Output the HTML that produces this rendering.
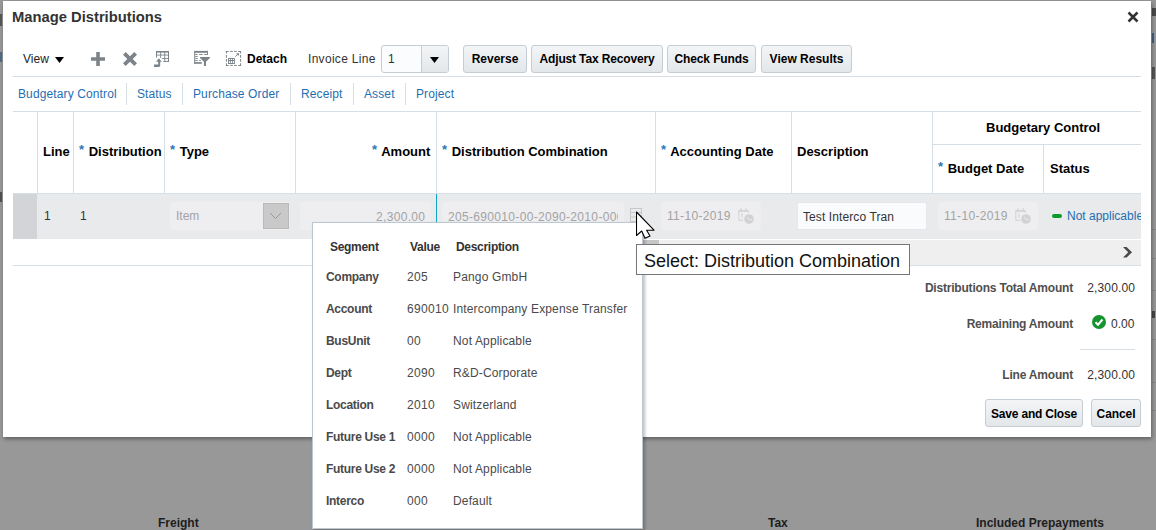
<!DOCTYPE html>
<html><head><meta charset="utf-8">
<style>
*{margin:0;padding:0;box-sizing:border-box}
html,body{width:1156px;height:530px;overflow:hidden;background:#989898;font-family:"Liberation Sans",sans-serif;position:relative}
.a{position:absolute;white-space:nowrap}
.t12{font-size:12px;line-height:12px}
.t13{font-size:13px;line-height:13px}
.b{font-weight:bold}
#dlg{position:absolute;left:3px;top:1px;width:1148px;height:436px;background:#fff;box-shadow:1px 2px 4px rgba(0,0,0,.38)}
.hl{position:absolute;height:1px;background:#d6dfe6}
.vl{position:absolute;width:1px;background:#d6dfe6}
.btn{position:absolute;height:28px;border:1px solid #c4ccd4;border-radius:3px;background:linear-gradient(#f3f5f7,#e3e7ea);font-weight:bold;font-size:12px;color:#000;text-align:center;line-height:26px}
.lnk{color:#1f6fb2;font-size:12px;line-height:12px;letter-spacing:0.12px}
.hd{font-size:13px;line-height:13px;font-weight:bold;color:#000}
.ast{color:#2a78b8;font-size:13px;font-weight:bold;position:relative;top:-2px;margin-right:1px}
.num{letter-spacing:0.33px}
.ico{position:absolute;fill:#7d8489}
.pp{font-size:12px;line-height:12px;color:#4a4a4a;letter-spacing:0.15px}
.pp.b{letter-spacing:-0.3px}
.pv{letter-spacing:0.33px}
</style></head><body>
<!-- background fragments -->
<div class="a b" style="left:158px;top:516px;font-size:12px;color:#1e1e1e">Freight</div>
<div class="a b" style="left:768px;top:516px;font-size:12px;color:#1e1e1e">Tax</div>
<div class="a b" style="left:976px;top:516px;font-size:12px;color:#1e1e1e">Included Prepayments</div>

<div class="a" style="left:1152px;top:8px;width:4px;height:8px;background:#2a2a2a;opacity:.7"></div>
<div class="a" style="left:1152px;top:33px;width:2px;height:10px;background:#1f4f80;opacity:.7"></div>
<div class="a" style="left:1152px;top:67px;width:3px;height:12px;background:#2a2a2a;opacity:.6"></div>
<div class="a" style="left:1152px;top:311px;width:3px;height:7px;background:#222;opacity:.7"></div>
<div class="a" style="left:0;top:14px;width:2px;height:12px;background:#2a2a2a;opacity:.6"></div>
<div class="a" style="left:0;top:52px;width:2px;height:10px;background:#1f4f80;opacity:.6"></div>
<div class="a" style="left:0;top:192px;width:2px;height:10px;background:#222;opacity:.6"></div>
<div class="a" style="left:1152px;top:229px;width:4px;height:1px;background:#888"></div>
<div class="a" style="left:1152px;top:258px;width:4px;height:1px;background:#888"></div>
<div class="a" style="left:1152px;top:290px;width:4px;height:1px;background:#888"></div>
<div class="a" style="left:1152px;top:339px;width:4px;height:1px;background:#888"></div>
<div class="a" style="left:1152px;top:382px;width:4px;height:1px;background:#888"></div>
<div class="a" style="left:1152px;top:410px;width:4px;height:1px;background:#888"></div>
<div id="dlg"></div>

<!-- title -->
<div class="a b" style="left:12px;top:10px;font-size:14.75px;line-height:15px;color:#333">Manage Distributions</div>
<!-- close -->
<svg class="a" style="left:1127px;top:11px" width="12" height="12" viewBox="0 0 12 12"><path d="M1.5 1.5L10.5 10.5M10.5 1.5L1.5 10.5" stroke="#333" stroke-width="2.5"/></svg>

<!-- toolbar -->
<div class="a t12" style="left:23px;top:53px;color:#222">View</div>
<svg class="a" style="left:55px;top:57px" width="9" height="6" viewBox="0 0 9 6"><path d="M0 0H9L4.5 6Z" fill="#000"/></svg>
<svg class="ico" style="left:91px;top:52px" width="14" height="14" viewBox="0 0 14 14"><path d="M5.2 0H8.8V5.2H14V8.8H8.8V14H5.2V8.8H0V5.2H5.2Z"/></svg>
<svg class="ico" style="left:123px;top:52px" width="14" height="14" viewBox="0 0 14 14"><path d="M0 2.69L2.69 0L7 4.31L11.31 0L14 2.69L9.69 7L14 11.31L11.31 14L7 9.69L2.69 14L0 11.31L4.31 7Z"/></svg>
<svg class="a" style="left:150px;top:48px" width="24" height="22" viewBox="0 0 24 22"><g fill="#7d8489">
<rect x="6" y="3" width="13" height="1.6"/>
<rect x="18" y="3" width="1" height="11"/>
<rect x="14.3" y="3" width="0.9" height="11"/>
<rect x="10.2" y="3" width="0.9" height="7"/>
<rect x="6" y="3" width="1" height="6.6"/>
<rect x="6" y="6.6" width="13" height="0.9"/>
<rect x="11.8" y="10" width="7.2" height="0.9"/>
<rect x="13.3" y="12.9" width="5.7" height="1"/>
<path d="M6 13.7H11.8L8.9 10.2Z"/>
<path d="M8.2 13H10.2V17.5Q10.2 18.9 8.8 18.9H4V16.6H8.2Z"/>
</g></svg>
<svg class="a" style="left:190px;top:48px" width="24" height="22" viewBox="0 0 24 22"><g fill="#7d8489">
<rect x="4.2" y="2.9" width="13.7" height="1.9"/>
<rect x="4.2" y="2.9" width="1" height="12.9"/>
<rect x="17" y="2.9" width="0.9" height="4"/>
<rect x="4.2" y="14.1" width="7.6" height="1.7"/>
<rect x="5.2" y="6" width="2.5" height="0.9"/>
<rect x="9.1" y="6" width="3.6" height="0.9"/>
<rect x="14.1" y="6" width="3.8" height="0.9"/>
<rect x="5.2" y="8.1" width="2.5" height="0.9"/>
<rect x="5.2" y="10" width="2.5" height="0.9"/>
<rect x="5.2" y="12" width="2.5" height="0.9"/>
<rect x="9.1" y="12" width="1.7" height="0.9"/>
<path d="M10 8.9H19.9V10L16 13.7V17.9H13.9V13.7L10 10Z"/>
</g></svg>
<svg class="a" style="left:222px;top:48px" width="24" height="22" viewBox="0 0 24 22"><g fill="#7d8489">
<path d="M3.9 2.9H6.6V3.9H4.9V5.6H3.9Z"/>
<rect x="8.1" y="2.9" width="2.7" height="1"/>
<rect x="12" y="2.9" width="2.7" height="1"/>
<path d="M16.2 2.9H19.1V5.6H18.1V3.9H16.2Z"/>
<rect x="3.9" y="7" width="1" height="2.8"/>
<rect x="3.9" y="11" width="1" height="2.7"/>
<rect x="18.1" y="7" width="1" height="2.8"/>
<rect x="18.1" y="11" width="1" height="2.7"/>
<path d="M3.9 15.2H4.9V16.9H6.6V17.9H3.9Z"/>
<rect x="8.1" y="16.9" width="2.7" height="1"/>
<rect x="12" y="16.9" width="2.7" height="1"/>
<path d="M18.1 15.2H19.1V17.9H16.2V16.9H18.1Z"/>
<rect x="6" y="10" width="6.9" height="6" rx="0.6"/>
<path d="M14.1 5.2H17V7.9Z"/>
</g>
<g fill="#fff"><rect x="6.9" y="11" width="1.2" height="1"/><rect x="8.9" y="11" width="1.3" height="1"/><rect x="11" y="11" width="1" height="1"/><rect x="6.9" y="13.1" width="1.2" height="1.9"/><rect x="8.9" y="13.1" width="1.3" height="1.9"/><rect x="11" y="13.1" width="1" height="1.9"/></g>
<path d="M13.3 8.7L16 6" stroke="#7d8489" stroke-width="1" fill="none"/>
</svg>
<div class="a t12 b" style="left:247px;top:53px;color:#000">Detach</div>
<div class="a t12" style="left:308px;top:53px;letter-spacing:0.3px;color:#333">Invoice Line</div>
<div class="a" style="left:381px;top:45px;width:68px;height:28px;border:1px solid #c4ccd4;border-radius:3px;background:#fbfcfd;overflow:hidden">
  <div class="a" style="left:39px;top:0;width:28px;height:26px;border-left:1px solid #c4ccd4;background:linear-gradient(#f3f5f7,#e3e7ea)"></div>
</div>
<div class="a t12" style="left:388px;top:53px;color:#333">1</div>
<svg class="a" style="left:430px;top:57px" width="9" height="6" viewBox="0 0 9 6"><path d="M0 0H9L4.5 6Z" fill="#000"/></svg>
<div class="btn" style="left:463px;top:45px;width:64px">Reverse</div>
<div class="btn" style="left:531px;top:45px;width:132px;letter-spacing:-0.15px">Adjust Tax Recovery</div>
<div class="btn" style="left:667px;top:45px;width:89px;letter-spacing:-0.1px">Check Funds</div>
<div class="btn" style="left:761px;top:45px;width:91px">View Results</div>
<div class="hl" style="left:13px;top:76px;width:1128px"></div>

<!-- links -->
<div class="a lnk" style="left:18px;top:88px">Budgetary Control</div>
<div class="vl" style="left:126px;top:83px;height:22px"></div>
<div class="a lnk" style="left:137px;top:88px">Status</div>
<div class="vl" style="left:182px;top:83px;height:22px"></div>
<div class="a lnk" style="left:193px;top:88px">Purchase Order</div>
<div class="vl" style="left:290px;top:83px;height:22px"></div>
<div class="a lnk" style="left:301px;top:88px">Receipt</div>
<div class="vl" style="left:353px;top:83px;height:22px"></div>
<div class="a lnk" style="left:364px;top:88px">Asset</div>
<div class="vl" style="left:405px;top:83px;height:22px"></div>
<div class="a lnk" style="left:416px;top:88px">Project</div>

<!-- table header -->
<div class="hl" style="left:13px;top:111px;width:1128px"></div>
<div class="vl" style="left:37px;top:111px;height:82px"></div>
<div class="vl" style="left:73px;top:111px;height:82px"></div>
<div class="vl" style="left:164px;top:111px;height:82px"></div>
<div class="vl" style="left:295px;top:111px;height:82px"></div>
<div class="vl" style="left:436px;top:111px;height:82px"></div>
<div class="vl" style="left:655px;top:111px;height:82px"></div>
<div class="vl" style="left:791px;top:111px;height:82px"></div>
<div class="vl" style="left:932px;top:111px;height:82px"></div>
<div class="hl" style="left:932px;top:144px;width:209px"></div>
<div class="vl" style="left:1043px;top:144px;height:49px"></div>
<div class="hl" style="left:13px;top:193px;width:1128px"></div>

<div class="a hd" style="left:43px;top:145px">Line</div>
<div class="a hd" style="left:79px;top:145px"><span class="ast">*</span> Distribution</div>
<div class="a hd" style="left:170px;top:145px"><span class="ast">*</span> Type</div>
<div class="a hd" style="left:372px;top:145px"><span class="ast">*</span> Amount</div>
<div class="a hd" style="left:442px;top:145px"><span class="ast">*</span> Distribution Combination</div>
<div class="a hd" style="left:661px;top:145px"><span class="ast">*</span> Accounting Date</div>
<div class="a hd" style="left:797px;top:145px">Description</div>
<div class="a hd" style="left:986px;top:121px">Budgetary Control</div>
<div class="a hd" style="left:938px;top:162px"><span class="ast">*</span> Budget Date</div>
<div class="a hd" style="left:1050px;top:162px">Status</div>

<!-- data row -->
<div class="a" style="left:13px;top:194px;width:1128px;height:45px;background:#e9eaec"></div>
<div class="a" style="left:13px;top:194px;width:24px;height:45px;background:#d2d4d7"></div>
<div class="a t12" style="left:44px;top:210px;color:#333">1</div>
<div class="a t12" style="left:80px;top:210px;color:#333">1</div>
<div class="a" style="left:170px;top:202px;width:120px;height:28px;border-radius:2px;background:#eeeef1"></div>
<div class="a t12" style="left:176px;top:210px;color:#a3a3a3">Item</div>
<div class="a" style="left:263px;top:203px;width:26px;height:26px;background:#c9c9c9;border:1px solid #b9b9b9"></div>
<svg class="a" style="left:269px;top:212px" width="13" height="8" viewBox="0 0 13 8"><path d="M1 1L6.5 6.5L12 1" stroke="#9a9a9a" stroke-width="1" fill="none"/></svg>
<div class="a" style="left:300px;top:202px;width:131px;height:28px;border-radius:2px;background:#eeeef1"></div>
<div class="a t12 num" style="left:376px;top:211px;color:#a3a3a3">2,300.00</div>
<div class="a" style="left:436px;top:194px;width:1px;height:30px;background:#0fa6cc"></div>
<div class="a" style="left:442px;top:202px;width:182px;height:28px;border-radius:2px;background:#eeeef1"></div>
<div class="a t12 num" style="left:448px;top:211px;width:170px;overflow:hidden;color:#a3a3a3">205-690010-00-2090-2010-000</div>
<svg class="a" style="left:630px;top:208px" width="13" height="14" viewBox="0 0 13 14"><g fill="none" stroke="#c8c8c8" stroke-width="1"><rect x="0.5" y="0.5" width="11" height="13"/><path d="M0.5 4.5H11.5M0.5 9H11.5"/></g></svg>
<div class="a" style="left:661px;top:202px;width:100px;height:28px;border-radius:2px;background:#eeeef1"></div>
<div class="a t12 num" style="left:667px;top:210px;color:#a3a3a3">11-10-2019</div>
<svg class="a" style="left:734px;top:204px" width="24" height="24" viewBox="0 0 24 24"><path d="M9.3 16.3H4.8V6.9H14.3V8.5" fill="none" stroke="#d2d2d4" stroke-width="1"/><rect x="4.3" y="6.4" width="10.5" height="1.3" fill="#d2d2d4"/><rect x="6.4" y="4.3" width="1.3" height="2.5" fill="#d2d2d4"/><rect x="11.4" y="4.3" width="1.3" height="2.5" fill="#d2d2d4"/><path d="M7 10.2L8 9.8V13.6" stroke="#d2d2d4" stroke-width="1" fill="none"/><circle cx="15" cy="15" r="4.8" fill="#d2d2d4"/><path d="M13.2 13.2L15.4 15.5L17.9 15.7" stroke="#efeff0" stroke-width="1" fill="none"/></svg>
<div class="a" style="left:797px;top:202px;width:130px;height:28px;border-radius:2px;background:#fafbfd;border:1px solid #e4e8ec"></div>
<div class="a t12" style="left:803px;top:211px;letter-spacing:0.1px;color:#333">Test Interco Tran</div>
<div class="a" style="left:938px;top:202px;width:100px;height:28px;border-radius:2px;background:#eeeef1"></div>
<div class="a t12 num" style="left:944px;top:210px;color:#a3a3a3">11-10-2019</div>
<svg class="a" style="left:1011px;top:204px" width="24" height="24" viewBox="0 0 24 24"><path d="M9.3 16.3H4.8V6.9H14.3V8.5" fill="none" stroke="#d2d2d4" stroke-width="1"/><rect x="4.3" y="6.4" width="10.5" height="1.3" fill="#d2d2d4"/><rect x="6.4" y="4.3" width="1.3" height="2.5" fill="#d2d2d4"/><rect x="11.4" y="4.3" width="1.3" height="2.5" fill="#d2d2d4"/><path d="M7 10.2L8 9.8V13.6" stroke="#d2d2d4" stroke-width="1" fill="none"/><circle cx="15" cy="15" r="4.8" fill="#d2d2d4"/><path d="M13.2 13.2L15.4 15.5L17.9 15.7" stroke="#efeff0" stroke-width="1" fill="none"/></svg>
<div class="a" style="left:1052px;top:214px;width:10px;height:4px;border-radius:2px;background:#0d9a2a"></div>
<div class="a t12" style="left:1067px;top:210px;width:74px;overflow:hidden;color:#1f6fb2">Not applicable</div>

<!-- scroll bar -->
<div class="a" style="left:643px;top:240px;width:498px;height:25px;background:#efefef"></div>
<div class="a" style="left:643px;top:240px;width:16px;height:4px;background:#c6c6c6"></div>
<svg class="a" style="left:1110px;top:240px" width="30" height="25" viewBox="0 0 30 25"><path d="M13 7.1H16.6L22 12.3L16.6 17.6H13L18.2 12.3Z" fill="#4a4a4a"/></svg>
<div class="hl" style="left:13px;top:265px;width:1128px"></div>

<!-- totals -->
<div class="a t12 b" style="right:83px;top:282px;letter-spacing:-0.2px;color:#4f4f4f">Distributions Total Amount</div>
<div class="a t12" style="right:21px;top:282px;letter-spacing:0.12px;color:#333">2,300.00</div>
<div class="a t12 b" style="right:83px;top:318px;letter-spacing:-0.2px;color:#4f4f4f">Remaining Amount</div>
<svg class="a" style="left:1092px;top:315px" width="14" height="14" viewBox="0 0 14 14"><circle cx="7" cy="7" r="7" fill="#16932f"/><path d="M3.5 7.2L6 9.7L10.5 4.5" stroke="#fff" stroke-width="2" fill="none"/></svg>
<div class="a t12" style="left:1111px;top:318px;color:#333">0.00</div>
<div class="hl" style="left:1080px;top:349px;width:55px"></div>
<div class="a t12 b" style="right:83px;top:369px;letter-spacing:-0.2px;color:#4f4f4f">Line Amount</div>
<div class="a t12" style="right:21px;top:369px;letter-spacing:0.12px;color:#333">2,300.00</div>
<div class="btn" style="left:985px;top:399px;width:98px;line-height:28px;letter-spacing:-0.2px">Save and Close</div>
<div class="btn" style="left:1091px;top:399px;width:50px;line-height:28px;letter-spacing:-0.1px">Cancel</div>

<!-- popup -->
<div class="a" style="left:312px;top:222px;width:331px;height:307px;background:#fff;border:1px solid #bcc7d1;box-shadow:2px 2px 3px rgba(0,0,0,.25)"></div>
<div class="a pp b" style="left:330px;top:241px;color:#333">Segment</div>
<div class="a pp b" style="left:410px;top:241px;color:#333">Value</div>
<div class="a pp b" style="left:456px;top:241px;color:#333">Description</div>

<div class="a pp b" style="left:326px;top:271px">Company</div><div class="a pp pv" style="left:407px;top:271px">205</div><div class="a pp" style="left:453px;top:271px">Pango GmbH</div>
<div class="a pp b" style="left:326px;top:303px">Account</div><div class="a pp pv" style="left:407px;top:303px">690010</div><div class="a pp" style="left:453px;top:303px">Intercompany Expense Transfer</div>
<div class="a pp b" style="left:326px;top:335px">BusUnit</div><div class="a pp pv" style="left:407px;top:335px">00</div><div class="a pp" style="left:453px;top:335px">Not Applicable</div>
<div class="a pp b" style="left:326px;top:367px">Dept</div><div class="a pp pv" style="left:407px;top:367px">2090</div><div class="a pp" style="left:453px;top:367px">R&amp;D-Corporate</div>
<div class="a pp b" style="left:326px;top:399px">Location</div><div class="a pp pv" style="left:407px;top:399px">2010</div><div class="a pp" style="left:453px;top:399px">Switzerland</div>
<div class="a pp b" style="left:326px;top:431px">Future Use 1</div><div class="a pp pv" style="left:407px;top:431px">0000</div><div class="a pp" style="left:453px;top:431px">Not Applicable</div>
<div class="a pp b" style="left:326px;top:463px">Future Use 2</div><div class="a pp pv" style="left:407px;top:463px">0000</div><div class="a pp" style="left:453px;top:463px">Not Applicable</div>
<div class="a pp b" style="left:326px;top:495px">Interco</div><div class="a pp pv" style="left:407px;top:495px">000</div><div class="a pp" style="left:453px;top:495px">Default</div>

<!-- tooltip -->
<div class="a" style="left:636px;top:244px;width:274px;height:31px;background:#fff;border:1px solid #767676"></div>
<div class="a" style="left:644px;top:252px;font-size:18px;line-height:18px;color:#111">Select: Distribution Combination</div>

<!-- cursor -->
<svg class="a" style="left:636px;top:211px" width="20" height="28" viewBox="0 0 20 28"><path d="M0.5 1V24.5L5.7 20L9 27.2L14 25L10.6 19.2H18Z" fill="#fff" stroke="#000" stroke-width="1.1" stroke-linejoin="round"/></svg>
</body></html>
